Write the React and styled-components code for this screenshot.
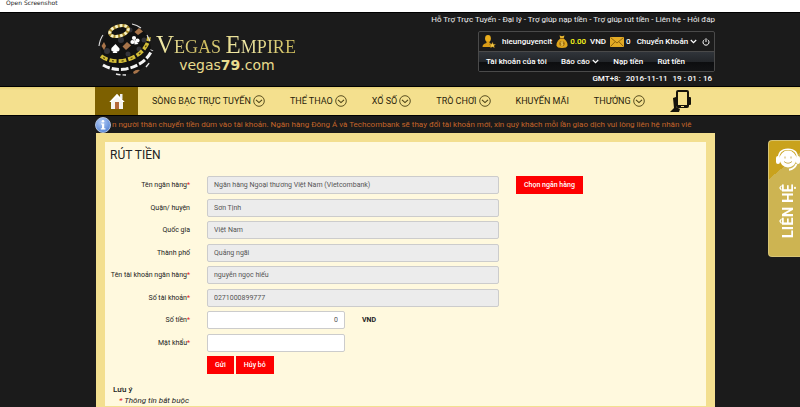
import React from "react";
import styled, { createGlobalStyle } from "styled-components";

const helpLinks = [
  "Hỗ Trợ Trực Tuyến",
  "Đại lý",
  "Trợ giúp nạp tiền",
  "Trợ giúp rút tiền",
  "Liên hệ",
  "Hỏi đáp",
];

const menu = [
  { text: "SÒNG BẠC TRỰC TUYẾN", more: true },
  { text: "THỂ THAO", more: true },
  { text: "XỔ SỐ", more: true },
  { text: "TRÒ CHƠI", more: true },
  { text: "KHUYẾN MÃI", more: false },
  { text: "THƯỞNG", more: true },
];

const bankFields = [
  { id: "bank", label: "Tên ngân hàng", value: "Ngân hàng Ngoại thương Việt Nam (Vietcombank)", required: true, pick: true },
  { id: "district", label: "Quận/ huyện", value: "Sơn Tịnh" },
  { id: "country", label: "Quốc gia", value: "Việt Nam" },
  { id: "city", label: "Thành phố", value: "Quảng ngãi" },
  { id: "owner", label: "Tên tài khoản ngân hàng", value: "nguyễn ngọc hiếu", required: true },
  { id: "number", label: "Số tài khoản", value: "0271000899777", required: true },
];

const Globe = () => (
  <svg width="56" height="56" viewBox="98 21 56 56" fill="none" aria-hidden="true">
    <circle cx="126" cy="49" r="25" fill="#121212" />
    <g fill="#34343a">
      <circle cx="121" cy="40" r="3" />
      <circle cx="130" cy="30" r="2.5" />
      <circle cx="144" cy="40" r="2.5" />
      <circle cx="107" cy="51" r="3" />
      <circle cx="128" cy="54" r="2.5" />
      <circle cx="139" cy="49" r="2.5" />
    </g>
    <ellipse cx="119" cy="31" rx="9.5" ry="5" transform="rotate(-16 119 31)" stroke="#a88b2c" strokeWidth="3.2" />
    <ellipse cx="119" cy="31" rx="9.5" ry="5" transform="rotate(-16 119 31)" stroke="#f7f1c4" strokeWidth="3" strokeDasharray="2.6 2" />
    <path d="M101 56Q109 62 122 61Q142 57 148 42L149 37" stroke="#d3bd37" strokeWidth="3.8" strokeDasharray="7.4 2" />
    <path d="M101 56Q109 62 122 61Q142 57 148 42L149 37" stroke="#4b3e10" strokeWidth="1.2" strokeDasharray="2 7.4" strokeDashoffset="-2.7" />
    <path d="M103 65Q113 71 126 69Q145 65 152 50" stroke="#f4f4f4" strokeWidth="3" strokeDasharray="7.4 2" />
    <path d="M116 74Q120 75 126 75M146 67L150 62" stroke="#e6e6e6" strokeWidth="1.4" strokeDasharray="5 2" />
    <path d="M99 46Q100 39 103 35M132 24Q137 25 141 28M147 35L150 41" stroke="#ddd" strokeWidth="1.1" />
    <path d="M115.5 44L119.5 48.5Q120 52 116.5 51.5L117.5 53H112.5L113.5 51.5Q110.5 51.5 111.5 48Z" fill="#fff" />
    <g fill="#fff">
      <circle cx="134" cy="38" r="2.1" />
      <circle cx="132.5" cy="42" r="2.1" />
      <circle cx="137.5" cy="40.5" r="2.1" />
      <path d="M134 39L138.5 44L134.5 44.5Z" />
    </g>
    <g fill="#a8744a">
      <path d="M127 42L131 45.5L126 50L122.5 46.5Z" />
      <path d="M139 28L143 31.5L138 35L134.5 32Z" />
      <path d="M104 42L106 46L104 50L101.5 46Z" />
      <path d="M133 72Q136 69 140 70L137 73L134 74Z" />
    </g>
  </svg>
);

const HomeIcon = () => (
  <svg width="16" height="17" viewBox="0 0 16 17" aria-hidden="true">
    <path d="M11 1H13.5V6H11Z" fill="#eee" />
    <path d="M8 1L0.5 9H2V16H14V9H15.5Z" fill="#f6f4f1" />
    <path d="M8 1L0.5 9H2.5L8 4L13.5 9H15.5Z" fill="#fff" />
    <rect x="6" y="9" width="4" height="7" fill="#b5683a" />
  </svg>
);

const CircleDown = () => (
  <svg width="12" height="12" viewBox="0 0 12 12" fill="none" stroke="#4a4015" aria-hidden="true">
    <circle cx="6" cy="6" r="5.3" strokeWidth="0.9" />
    <path d="M3 4.9L6 7.6L9 4.9" strokeWidth="1.1" />
  </svg>
);

const SmallDown = () => (
  <svg width="7" height="5" viewBox="0 0 7 5" fill="none" aria-hidden="true">
    <path d="M0.8 1L3.5 3.6L6.2 1" stroke="#fff" strokeWidth="1.2" />
  </svg>
);

const PhoneIcon = () => (
  <svg width="22" height="24" viewBox="0 0 22 24" aria-hidden="true">
    <path d="M0 23L4 19L3 9L6 8V18L10 20L9 23Z" fill="#15130a" />
    <rect x="17" y="8" width="4" height="8" rx="1" fill="#15130a" />
    <rect x="6" y="1" width="13" height="18" rx="2" fill="#15130a" />
    <rect x="8" y="3" width="9" height="13" fill="#f3df8c" />
    <rect x="11" y="17" width="3" height="1" fill="#f3df8c" />
  </svg>
);

const UserIcon = () => (
  <svg width="14" height="13" viewBox="0 0 14 13" aria-hidden="true">
    <ellipse cx="6" cy="3.5" rx="2.9" ry="3.4" fill="#e9ad1c" />
    <path d="M4.5 6H7.5V8L11 9.5V12H0.5Q0.3 9.5 2.5 8.8L4.5 8Z" fill="#d99c17" />
    <path d="M10.5 7L11.4 9.2L13.8 9.3L12 10.7L12.6 13L10.5 11.8L8.4 13L9 10.7L7.2 9.3L9.6 9.2Z" fill="#f4c744" stroke="#5b3c05" strokeWidth="0.3" />
  </svg>
);

const MoneyBag = () => (
  <svg width="12" height="13" viewBox="0 0 12 13" aria-hidden="true">
    <path d="M3.5 0.5L6 1.2L8.5 0.5L7.6 3.2H4.4Z" fill="#e9b730" />
    <path d="M4.3 3.5H7.7Q12 7 11.5 10.5Q11 13 6 13Q1 13 0.5 10.5Q0 7 4.3 3.5Z" fill="#dfa51d" />
    <path d="M4 3.5H8" stroke="#8a5b08" strokeWidth="0.8" />
    <circle cx="6" cy="8.6" r="2.7" fill="#9b680c" />
    <path d="M7.3 7.2Q5 6.4 4.9 7.7Q5 8.6 6.2 8.6Q7.4 8.9 7 9.8Q6 10.6 4.7 9.9M6 6.2V11" fill="none" stroke="#ffdc62" strokeWidth="0.7" />
  </svg>
);

const Envelope = () => (
  <svg width="14" height="10" viewBox="0 0 14 10" aria-hidden="true">
    <rect width="14" height="10" fill="#e3ab25" />
    <path d="M0.5 0.5L7 6L13.5 0.5M0.5 9.5L5 4.8M13.5 9.5L9 4.8" fill="none" stroke="#7a5208" strokeWidth="0.8" />
  </svg>
);

const PowerIcon = () => (
  <svg width="8" height="8" viewBox="0 0 8 8" fill="none" stroke="#fff" aria-hidden="true">
    <path d="M2.3 1.7A3 3 0 1 0 5.7 1.7M4 0.3V4" strokeWidth="1" />
  </svg>
);

const InfoIcon = () => (
  <svg width="16" height="16" viewBox="0 0 16 16" aria-hidden="true">
    <defs>
      <radialGradient id="info" cx="0.4" cy="0.3" r="0.8">
        <stop offset="0" stopColor="#b3cdf7" />
        <stop offset="1" stopColor="#4a7bd0" />
      </radialGradient>
    </defs>
    <circle cx="8" cy="8" r="7.5" fill="url(#info)" stroke="#c9d8f2" strokeWidth="0.8" />
    <circle cx="8" cy="4.2" r="1.3" fill="#fff" />
    <path d="M6 6.5H9.2V11.3H10.4V12.5H5.8V11.3H7V7.6H6Z" fill="#fff" />
  </svg>
);

const Headset = () => (
  <svg width="24" height="24" viewBox="0 0 24 24" fill="none" aria-hidden="true">
    <circle cx="12" cy="11" r="8.4" fill="#fff" />
    <path d="M2.5 12Q2 1.2 12 1.2Q22 1.2 21.5 12" stroke="#fff" strokeWidth="1.6" />
    <rect x="0" y="8" width="4" height="8" rx="2" fill="#fff" />
    <rect x="20" y="8" width="4" height="8" rx="2" fill="#fff" />
    <path d="M20.5 16Q18.5 21 13 21.8" stroke="#fff" strokeWidth="2" />
    <path d="M8 13.5Q12 17 16 13.5" stroke="#c4a84a" strokeWidth="0.9" />
    <path d="M9 8.5V10.5M15 8.5V10.5" stroke="#c4a84a" strokeWidth="0.9" />
  </svg>
);

const App = () => {
  return (
    <Page>
      <GlobalStyle />
      <Strip>Open Screenshot</Strip>
      <Header>
        <HeaderInner>
          <Logo href="#">
            <Globe />
            <LogoText>
              <Brand>
                <Big>V</Big>EGAS <Big>E</Big>MPIRE
              </Brand>
              <Domain>
                vegas<b>79</b>.com
              </Domain>
            </LogoText>
          </Logo>
          <HeaderRight>
            <HelpLinks>
              {helpLinks.map((text, i) => (
                <React.Fragment key={text}>
                  {i > 0 && " - "}
                  <a href="#">{text}</a>
                </React.Fragment>
              ))}
            </HelpLinks>
            <Account>
              <AccountRow>
                <UserIcon />
                <UserName>hieunguyencit</UserName>
                <MoneyBag />
                <Balance>0.00</Balance>
                <Currency>VND</Currency>
                <Envelope />
                <Count>0</Count>
                <AccountLink href="#">
                  Chuyển Khoản <SmallDown />
                </AccountLink>
                <Power type="button" aria-label="Thoát">
                  <PowerIcon />
                </Power>
              </AccountRow>
              <AccountMenu>
                <AccountLink href="#">Tài khoản của tôi</AccountLink>
                <AccountLink href="#">
                  Báo cáo <SmallDown />
                </AccountLink>
                <AccountLink href="#">Nạp tiền</AccountLink>
                <AccountLink href="#">Rút tiền</AccountLink>
              </AccountMenu>
            </Account>
            <Clock>
              <span>GMT+8:</span>
              <span>2016-11-11</span>
              <span>19 : 01 : 16</span>
            </Clock>
          </HeaderRight>
        </HeaderInner>
      </Header>
      <Nav>
        <NavInner>
          <Home href="#" aria-label="Trang chủ">
            <HomeIcon />
          </Home>
          <NavList>
            {menu.map((item) => (
              <NavLink key={item.text} href="#">
                {item.text}
                {item.more && <CircleDown />}
              </NavLink>
            ))}
            <NavLink href="#" aria-label="Di động">
              <PhoneIcon />
            </NavLink>
          </NavList>
        </NavInner>
      </Nav>
      <Band>
        <NoticeInner>
          <InfoIcon />
          <NoticeText>
            n người thân chuyển tiền dùm vào tài khoản. Ngân hàng Đông Á và Techcombank sẽ thay đổi tài khoản
            mới, xin quý khách mỗi lần giao dịch vui lòng liên hệ nhân viê
          </NoticeText>
        </NoticeInner>
      </Band>
      <Main>
        <Panel>
          <Title>RÚT TIỀN</Title>
          <form onSubmit={(e) => e.preventDefault()}>
            {bankFields.map((field) => (
              <Row key={field.id}>
                <Label htmlFor={field.id}>
                  {field.label}
                  {field.required && <Star>*</Star>}
                </Label>
                <Input id={field.id} defaultValue={field.value} readOnly />
                {field.pick && <Button type="button">Chọn ngân hàng</Button>}
              </Row>
            ))}
            <Row $short>
              <Label htmlFor="amount">
                Số tiền<Star>*</Star>
              </Label>
              <Input id="amount" defaultValue="0" $right />
              <Unit>VND</Unit>
            </Row>
            <Row $short>
              <Label htmlFor="password">
                Mật khẩu<Star>*</Star>
              </Label>
              <Input id="password" type="password" />
            </Row>
            <Row>
              <span />
              <Actions>
                <Button type="submit">Gửi</Button>
                <Button type="reset">Hủy bỏ</Button>
              </Actions>
            </Row>
          </form>
          <Note>
            <NoteTitle>Lưu ý</NoteTitle>
            <NoteText>
              <Star>*</Star> Thông tin bắt buộc
            </NoteText>
          </Note>
        </Panel>
      </Main>
      <Contact href="#">
        <Headset />
        <ContactText>LIÊN HỆ</ContactText>
      </Contact>
    </Page>
  );
};

export default App;

const GlobalStyle = createGlobalStyle`
  * {
    box-sizing: border-box;
  }
  body {
    margin: 0;
    background: #1b1b1b;
    font-family: Roboto, "Liberation Sans", sans-serif;
  }
  a {
    color: inherit;
    text-decoration: none;
  }
  svg {
    flex-shrink: 0;
  }
`;
const Page = styled.div``;
const Strip = styled.div`
  height: 12px;
  padding-left: 6px;
  background: #fff;
  color: #222;
  font-family: "DejaVu Sans", sans-serif;
  font-size: 6px;
  line-height: 6px;
`;
const Band = styled.div`
  padding-left: 10px;
`;
const Inner = styled.div`
  display: flex;
  width: 100%;
  max-width: 620px;
  margin: 0 auto;
`;
const Header = styled(Band).attrs({ as: "header" })`
  border-top: 1px solid #000;
  border-bottom: 1px solid #000;
  background: #1b1b1b;
  color: #fff;
`;
const HeaderInner = styled(Inner)`
  justify-content: space-between;
  height: 73px;
`;
const Logo = styled.a`
  display: flex;
  gap: 2px;
  padding: 8px 0 0 3px;
`;
const LogoText = styled.div`
  display: flex;
  flex-direction: column;
  padding-top: 12px;
`;
const Brand = styled.div`
  font-family: "Liberation Serif", serif;
  font-size: 18px;
  line-height: 24px;
  white-space: nowrap;
  background: linear-gradient(100deg, #f5efb0, #cdbb5c 35%, #f3ecab 60%, #cbb957);
  background-clip: text;
  color: transparent;
`;
const Big = styled.span`
  font-size: 25px;
`;
const Domain = styled.div`
  padding-left: 2px;
  font-family: "DejaVu Sans", sans-serif;
  font-size: 14px;
  line-height: 12px;
  text-align: center;
  color: #e9dc8e;
`;
const HeaderRight = styled.div`
  display: flex;
  flex-direction: column;
  align-items: flex-end;
`;
const HelpLinks = styled.div`
  padding-bottom: 4px;
  font-size: 8px;
  line-height: 14px;
  color: #eee;
`;
const Account = styled.div`
  width: 237px;
  border: 1px solid #4a4a4a;
  border-radius: 2px;
  font-size: 8px;
  font-weight: 500;
`;
const AccountRow = styled.div`
  display: flex;
  align-items: center;
  height: 19px;
  padding: 0 4px 0 3px;
`;
const AccountLink = styled.a`
  display: flex;
  align-items: center;
  gap: 2px;
  white-space: nowrap;
`;
const UserName = styled.span`
  margin: 0 4px 0 6px;
`;
const Balance = styled.span`
  margin: 0 4px 0 2px;
  color: #ffff1a;
`;
const Currency = styled.span`
  margin-right: 4px;
`;
const Count = styled.span`
  margin: 0 6px 0 2px;
`;
const Power = styled.button`
  display: flex;
  margin-left: auto;
  padding: 0;
  border: 0;
  background: none;
`;
const AccountMenu = styled.div`
  display: flex;
  align-items: center;
  justify-content: space-between;
  height: 20px;
  padding: 0 29px 0 7px;
  border-top: 1px solid #4a4a4a;
  background: linear-gradient(#30343a, #23262a 50%, #0c0d0f 50%, #121315);
`;
const Clock = styled.div`
  display: flex;
  gap: 5px;
  padding: 1px 3px 0 0;
  font-size: 8px;
  font-weight: 500;
  line-height: 12px;
`;
const Nav = styled(Band).attrs({ as: "nav" })`
  background: linear-gradient(#e6d077, #f4e08e 3px);
  border-bottom: 1px solid #000;
`;
const NavInner = styled(Inner)`
  height: 28px;
`;
const Home = styled.a`
  display: flex;
  align-items: center;
  justify-content: center;
  width: 43px;
  background: #7d6000;
`;
const NavList = styled.div`
  display: flex;
  align-items: center;
  gap: 25px;
  padding-left: 14px;
`;
const NavLink = styled.a`
  display: flex;
  align-items: center;
  gap: 2px;
  font-size: 9px;
  color: #2a240c;
  white-space: nowrap;
`;
const NoticeInner = styled(Inner)`
  align-items: center;
  gap: 1px;
  height: 17px;
`;
const NoticeText = styled.div`
  flex: 1;
  min-width: 0;
  overflow: hidden;
  white-space: nowrap;
  font-size: 8px;
  line-height: 14px;
  color: #c4652a;
`;
const Main = styled.main`
  padding-left: 11px;
`;
const Panel = styled.section`
  width: 100%;
  max-width: 619px;
  margin: 0 auto;
  padding: 6px 5px 0;
  border: 9px solid #f3df8f;
  background: #fff9de;
  color: #222;
`;
const Title = styled.h1`
  margin: 0 0 13px;
  font-size: 12px;
  font-weight: 400;
  line-height: 15px;
`;
const Row = styled.div`
  display: grid;
  grid-template-columns: 80px ${(props) => (props.$short ? "138px" : "minmax(0, 292px)")} auto;
  justify-content: start;
  align-items: center;
  column-gap: 17px;
  height: 18px;
  margin-bottom: 5px;
  &:nth-child(even) {
    margin-bottom: 4px;
  }
`;
const Label = styled.label`
  text-align: right;
  font-size: 7px;
  white-space: nowrap;
`;
const Star = styled.span`
  color: #e02020;
`;
const Input = styled.input`
  width: 100%;
  height: 18px;
  padding: 0 6px;
  border: 1px solid #ccc;
  border-radius: 2px;
  background: #fff;
  font-family: inherit;
  font-size: 7px;
  color: #555;
  text-align: ${(props) => (props.$right ? "right" : "left")};
  &:read-only {
    background: #ececec;
  }
`;
const Button = styled.button`
  height: 18px;
  padding: 0 8px;
  border: 0;
  background: #fe0000;
  font-family: inherit;
  font-size: 7px;
  font-weight: 500;
  color: #fff;
  white-space: nowrap;
`;
const Unit = styled.span`
  font-size: 7px;
  font-weight: 700;
`;
const Actions = styled.div`
  display: flex;
  gap: 2px;
`;
const Note = styled.div`
  padding: 5px 3px 0;
  font-size: 8px;
  line-height: 11px;
`;
const NoteTitle = styled.div`
  font-weight: 500;
`;
const NoteText = styled.div`
  padding-left: 6px;
  font-style: italic;
`;
const Contact = styled.a`
  position: fixed;
  top: 140px;
  right: 0;
  display: flex;
  flex-direction: column;
  align-items: center;
  justify-content: space-between;
  width: 32px;
  height: 117px;
  padding: 7px 0 18px 6px;
  border: 1px solid #d8c574;
  border-right: 0;
  border-radius: 4px 0 0 4px;
  background: linear-gradient(140deg, #c9a21c 27%, #cdb452 27%);
  color: #fff;
`;
const ContactText = styled.span`
  writing-mode: vertical-rl;
  transform: rotate(180deg);
  font-size: 15px;
  font-weight: 700;
  line-height: 16px;
`;
